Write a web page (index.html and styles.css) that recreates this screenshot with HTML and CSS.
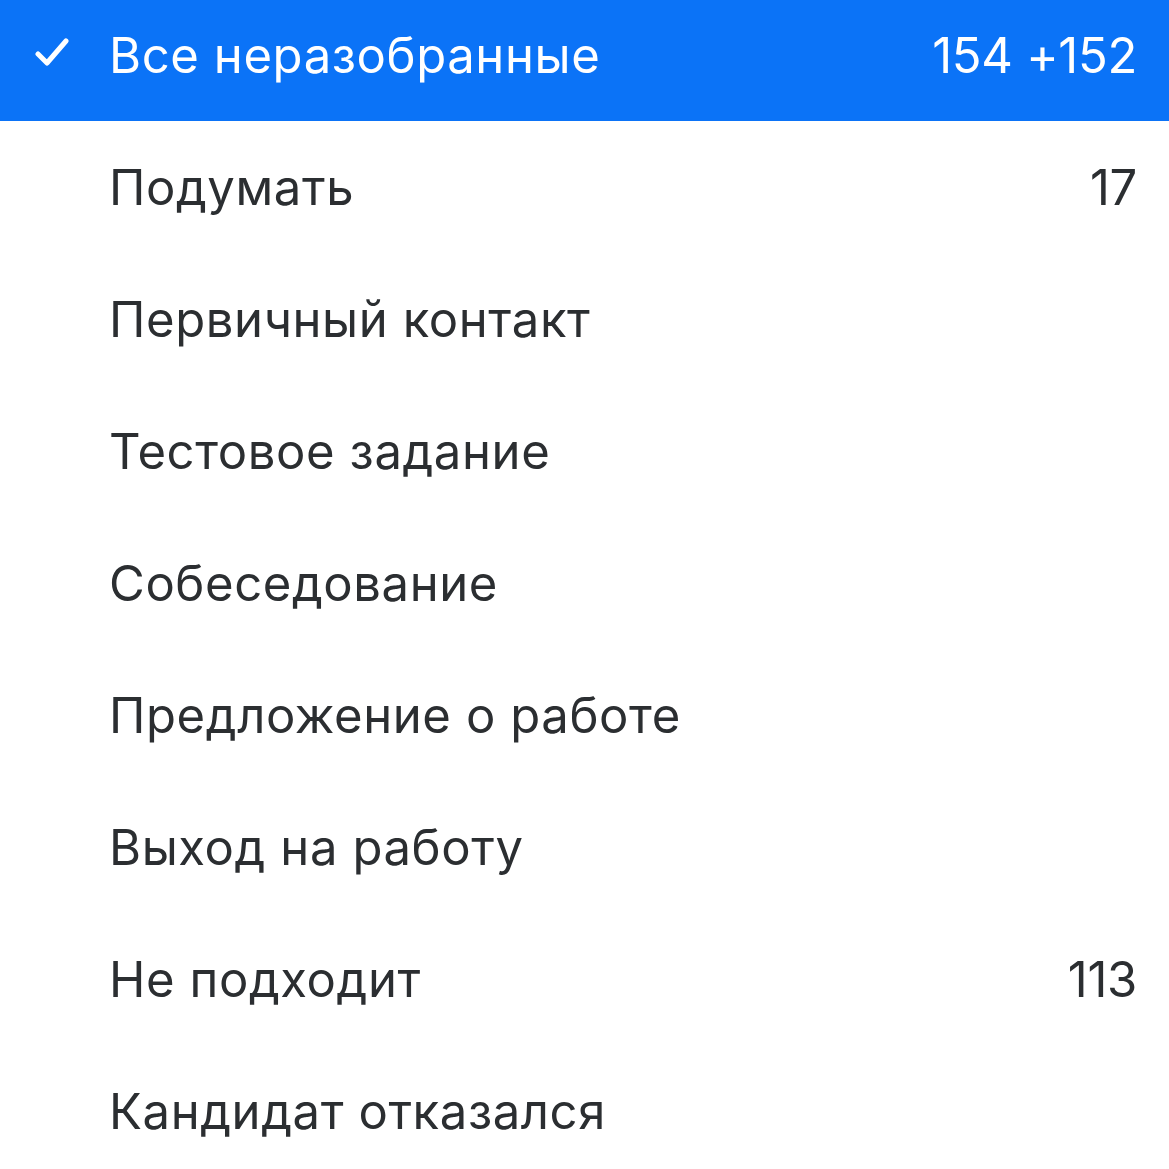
FILE: index.html
```html
<!DOCTYPE html>
<html lang="ru">
<head>
<meta charset="utf-8">
<link rel="stylesheet" href="styles.css">
</head>
<body>
<ul class="stages">
  <li class="stage stage--active">
    <span class="stage__check">
      <svg viewBox="0 0 34 30" width="34" height="30"><path d="M3 17 L12 26 L31 4" fill="none" stroke="#fff" stroke-width="5" stroke-linecap="round" stroke-linejoin="round"/></svg>
    </span>
    <span class="stage__name">Все неразобранные</span>
    <span class="stage__count">154 +152</span>
  </li>
  <li class="stage"><span class="stage__check"></span><span class="stage__name">Подумать</span><span class="stage__count">17</span></li>
  <li class="stage"><span class="stage__check"></span><span class="stage__name">Первичный контакт</span></li>
  <li class="stage"><span class="stage__check"></span><span class="stage__name">Тестовое задание</span></li>
  <li class="stage"><span class="stage__check"></span><span class="stage__name">Собеседование</span></li>
  <li class="stage"><span class="stage__check"></span><span class="stage__name">Предложение о работе</span></li>
  <li class="stage"><span class="stage__check"></span><span class="stage__name">Выход на работу</span></li>
  <li class="stage"><span class="stage__check"></span><span class="stage__name">Не подходит</span><span class="stage__count">113</span></li>
  <li class="stage"><span class="stage__check"></span><span class="stage__name">Кандидат отказался</span></li>
</ul>
</body>
</html>
```
FILE: styles.css
```css
html, body {
  margin: 0;
  padding: 0;
  background: #fff;
  overflow: hidden;
}

.stages {
  list-style: none;
  margin: -11px 0 0;
  padding: 0;
  font-family: Inter, "Noto Sans", sans-serif;
  font-size: 49px;
  color: #2b2e31;
}

.stage {
  display: flex;
  align-items: center;
  height: 132px;
  padding: 0 32px 0 0;
}

.stage--active {
  background: #0b73f7;
  color: #fff;
}

/* leading column: holds the tick on the selected stage */
.stage__check {
  width: 109px;
  flex: none;
  display: flex;
  padding-left: 35px;
  padding-bottom: 6px;
  box-sizing: border-box;
}

.stage__name {
  flex: 1;
  letter-spacing: 0.6px;
}

.stage__count {
  flex: none;
  letter-spacing: -0.3px;
}
```
